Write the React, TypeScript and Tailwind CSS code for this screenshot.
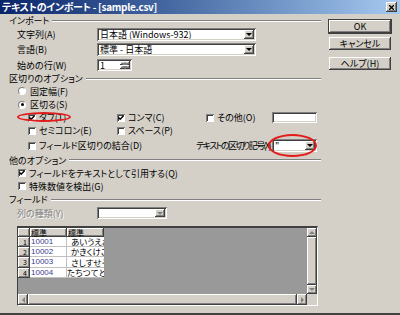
import React from 'react';

const sunken =
  'bg-white shadow-[inset_1px_1px_0_#808080,inset_-1px_-1px_0_#ffffff,inset_2px_2px_0_#404040,inset_-2px_-2px_0_#d4d0c8]';
const raised =
  'bg-[#d4d0c8] shadow-[inset_-1px_-1px_0_#404040,inset_1px_1px_0_#ffffff,inset_-2px_-2px_0_#808080]';

const Tri: React.FC<{ dir: 'up' | 'down' | 'left' | 'right'; color?: string }> = ({ dir, color = '#000' }) => {
  const pts = {
    down: '0,0 6,0 3,3',
    up: '0,3 6,3 3,0',
    left: '3,0 3,6 0,3',
    right: '0,0 0,6 3,3',
  }[dir];
  const vertical = dir === 'up' || dir === 'down';
  return (
    <svg width={vertical ? 6 : 3} height={vertical ? 3 : 6} viewBox={vertical ? '0 0 6 3' : '0 0 3 6'}>
      <polygon points={pts} fill={color} />
    </svg>
  );
};

const Combo: React.FC<{ value?: string; className?: string; disabled?: boolean }> = ({ value, className, disabled }) => (
  <div className={`flex shrink-0 p-[2px] ${sunken} ${className ?? ''}`}>
    <span className="flex-1 pl-[1px] flex items-center overflow-hidden whitespace-nowrap leading-[9px]">{value}</span>
    <div className={`w-[10px] flex items-center justify-center ${raised}`}>
      <Tri dir="down" color={disabled ? '#808080' : '#000'} />
    </div>
  </div>
);

const Check: React.FC<{ checked?: boolean }> = ({ checked }) => (
  <span className="w-[8px] h-[8px] shrink-0 bg-white shadow-[inset_1px_1px_0_#808080,inset_-1px_-1px_0_#ffffff,inset_2px_2px_0_#404040] flex items-center justify-center">
    {checked && (
      <svg width="6" height="6" viewBox="0 0 6 6">
        <path d="M0.5 2.5 L2.2 4.3 L5.5 0.8" stroke="#000" strokeWidth="1.4" fill="none" />
      </svg>
    )}
  </span>
);

const CheckItem: React.FC<{ label: string; checked?: boolean; className?: string }> = ({ label, checked, className }) => (
  <div className={`flex items-center gap-[3px] ${className ?? ''}`}>
    <Check checked={checked} />
    <span className="whitespace-nowrap">{label}</span>
  </div>
);

const Radio: React.FC<{ label: string; selected?: boolean }> = ({ label, selected }) => (
  <div className="flex items-center gap-[4px]">
    <span className="w-[8px] h-[8px] rounded-full bg-white border border-t-[#808080] border-l-[#808080] border-r-white border-b-white flex items-center justify-center">
      {selected && <span className="w-[3px] h-[3px] rounded-full bg-black" />}
    </span>
    <span>{label}</span>
  </div>
);

const Group: React.FC<{ label: string; h: string }> = ({ label, h }) => (
  <div className={`flex items-center pl-[9px] ${h}`}>
    <span className="whitespace-nowrap">{label}</span>
    <div className="flex-1 ml-[3px] border-t border-t-[#808080] border-b border-b-white" />
  </div>
);

const Btn: React.FC<{ label: string; isDefault?: boolean }> = ({ label, isDefault }) => (
  <div
    className={`h-[13px] w-[62px] flex items-center justify-center ${raised} ${
      isDefault ? 'outline outline-1 outline-[#404040]' : ''
    }`}
  >
    {label}
  </div>
);

const rows = [
  { n: '1', a: '10001', b: 'あいうえお', pad: 'pl-[4px]', h: 'h-[10px]' },
  { n: '2', a: '10002', b: 'かきくけこ', pad: 'pl-[4px]', h: 'h-[10px]' },
  { n: '3', a: '10003', b: 'さしすせそ', pad: 'pl-[4px]', h: 'h-[11px]' },
  { n: '4', a: '10004', b: 'たちつてと', pad: 'pl-0', h: 'h-[10px]' },
];

export default function App() {
  return (
    <div className="w-[400px] h-[315px] overflow-hidden bg-[#d4d0c8] flex flex-col text-[9px] leading-none text-black font-['Noto_Sans_CJK_JP',sans-serif] [font-feature-settings:'palt'] border-b-2 border-b-[#404040]">
      {/* タイトルバー */}
      <div className="h-[14px] shrink-0 flex items-center pl-[2px] pr-[3px] bg-linear-to-r from-[#0a246a] to-[#a6caf0]">
        <span className="text-white font-bold text-[10px] tracking-[-0.3px] whitespace-nowrap">
          テキストのインポート - [sample.csv]
        </span>
        <div className={`ml-auto w-[11px] h-[10px] flex items-center justify-center ${raised}`}>
          <svg width="5" height="5" viewBox="0 0 5 5">
            <path d="M0 0 L5 5 M5 0 L0 5" stroke="#000" strokeWidth="1.3" />
          </svg>
        </div>
      </div>

      <div className="flex flex-1">
        {/* 左側 */}
        <div className="w-[321px] flex flex-col">
          <Group label="インポート" h="h-[13px]" />
          <div className="h-[14px] flex items-center">
            <span className="w-[97px] pl-[17px]">文字列(A)</span>
            <Combo value="日本語 (Windows-932)" className="w-[159px] h-[13px]" />
          </div>
          <div className="h-[17px] flex items-center">
            <span className="w-[97px] pl-[17px]">言語(B)</span>
            <Combo value="標準 - 日本語" className="w-[159px] h-[13px]" />
          </div>
          <div className="h-[14px] flex items-center">
            <span className="w-[97px] pl-[17px]">始めの行(W)</span>
            <div className={`w-[35px] h-[12px] flex p-[2px] ${sunken}`}>
              <span className="flex-1 pl-[1px] flex items-center">1</span>
              <div className="w-[10px] flex flex-col">
                <div className={`flex-1 flex items-center justify-center ${raised}`}>
                  <Tri dir="up" color="#808080" />
                </div>
                <div className={`flex-1 flex items-center justify-center ${raised}`}>
                  <Tri dir="down" color="#808080" />
                </div>
              </div>
            </div>
          </div>

          <Group label="区切りのオプション" h="h-[13px]" />
          <div className="h-[12px] flex items-center pl-[18px]">
            <Radio label="固定幅(F)" />
          </div>
          <div className="h-[15px] flex items-center pl-[18px]">
            <Radio label="区切る(S)" selected />
          </div>
          <div className="relative h-[11px] flex items-center pl-[28px]">
            <CheckItem label="タブ(T)" checked className="w-[89px]" />
            <CheckItem label="コンマ(C)" checked className="w-[89px]" />
            <CheckItem label="その他(O)" className="w-[66px]" />
            <div className={`w-[45px] h-[11px] ${sunken}`} />
            <div className="absolute left-[17px] top-0 w-[54px] h-[10px] rounded-[50%] border-2 border-[#e21b1b]" />
          </div>
          <div className="h-[15px] flex items-center pl-[28px]">
            <CheckItem label="セミコロン(E)" className="w-[89px]" />
            <CheckItem label="スペース(P)" />
          </div>
          <div className="relative h-[15px] flex items-center pl-[28px] pr-[4px]">
            <CheckItem label="フィールド区切りの結合(D)" className="flex-1" />
            <span className="mr-[2px] whitespace-nowrap tracking-[-1.6px]">テキストの区切り記号(X)</span>
            <Combo value={'"'} className="w-[45px] h-[13px]" />
            <div className="absolute left-[268px] top-[-4px] w-[49px] h-[23px] rounded-[50%] border-2 border-[#e21b1b]" />
          </div>

          <Group label="他のオプション" h="h-[14px]" />
          <div className="h-[12px] flex items-center pl-[18px]">
            <CheckItem label="フィールドをテキストとして引用する(Q)" checked />
          </div>
          <div className="h-[14px] flex items-center pl-[18px]">
            <CheckItem label="特殊数値を検出(G)" />
          </div>

          <Group label="フィールド" h="h-[13px]" />
          <div className="h-[14px] flex items-center">
            <span className="w-[97px] pl-[17px] text-[#808080] [text-shadow:1px_1px_0_#ffffff]">列の種類(Y)</span>
            <Combo className="w-[70px] h-[12px]" disabled />
          </div>

          {/* プレビュー表 */}
          <div className="mt-[6px] ml-[17px] w-[301px] h-[80px] flex flex-col border-t-2 border-l border-t-[#404040] border-l-[#404040] border-r border-b border-r-white border-b-white">
            <div className="flex flex-1">
              <div className="flex-1 bg-[#999999] flex flex-col">
                <div className="h-[9px] flex text-[8px]">
                  <div className={`w-[12px] ${raised}`} />
                  <div className={`w-[37px] pl-[1px] flex items-center ${raised}`}>標準</div>
                  <div className={`w-[37px] pl-[1px] flex items-center ${raised}`}>標準</div>
                </div>
                {rows.map((r) => (
                  <div key={r.n} className={`${r.h} flex`}>
                    <div className={`w-[12px] pl-[5px] flex items-center text-[7px] ${raised}`}>{r.n}</div>
                    <div className="w-[37px] bg-white border-r border-b border-[#c0c0c0] pl-[1px] flex items-center text-[8px] text-[#3b3b8f] font-['Liberation_Sans',sans-serif]">
                      {r.a}
                    </div>
                    <div
                      className={`w-[37px] bg-white border-b border-[#c0c0c0] ${r.pad} flex items-center overflow-hidden whitespace-nowrap text-[8.5px]`}
                    >
                      {r.b}
                    </div>
                  </div>
                ))}
              </div>
              <div className="w-[10px] flex flex-col">
                <div className={`h-[9px] flex items-center justify-center ${raised}`}>
                  <Tri dir="up" color="#808080" />
                </div>
                <div className={`flex-1 ${raised}`} />
                <div className={`h-[9px] flex items-center justify-center ${raised}`}>
                  <Tri dir="down" color="#808080" />
                </div>
              </div>
            </div>
            <div className="h-[11px] flex">
              <div className={`w-[10px] flex items-center justify-center ${raised}`}>
                <Tri dir="left" color="#808080" />
              </div>
              <div className={`flex-1 ${raised}`} />
              <div className={`w-[10px] flex items-center justify-center ${raised}`}>
                <Tri dir="right" color="#808080" />
              </div>
              <div className="w-[10px] bg-[#d4d0c8]" />
            </div>
          </div>
        </div>

        {/* 右側のボタン */}
        <div className="flex flex-col pl-[8px] pt-[6px]">
          <Btn label="OK" isDefault />
          <div className="mt-[4px]">
            <Btn label="キャンセル" />
          </div>
          <div className="mt-[7px]">
            <Btn label="ヘルプ(H)" />
          </div>
        </div>
      </div>
    </div>
  );
}
